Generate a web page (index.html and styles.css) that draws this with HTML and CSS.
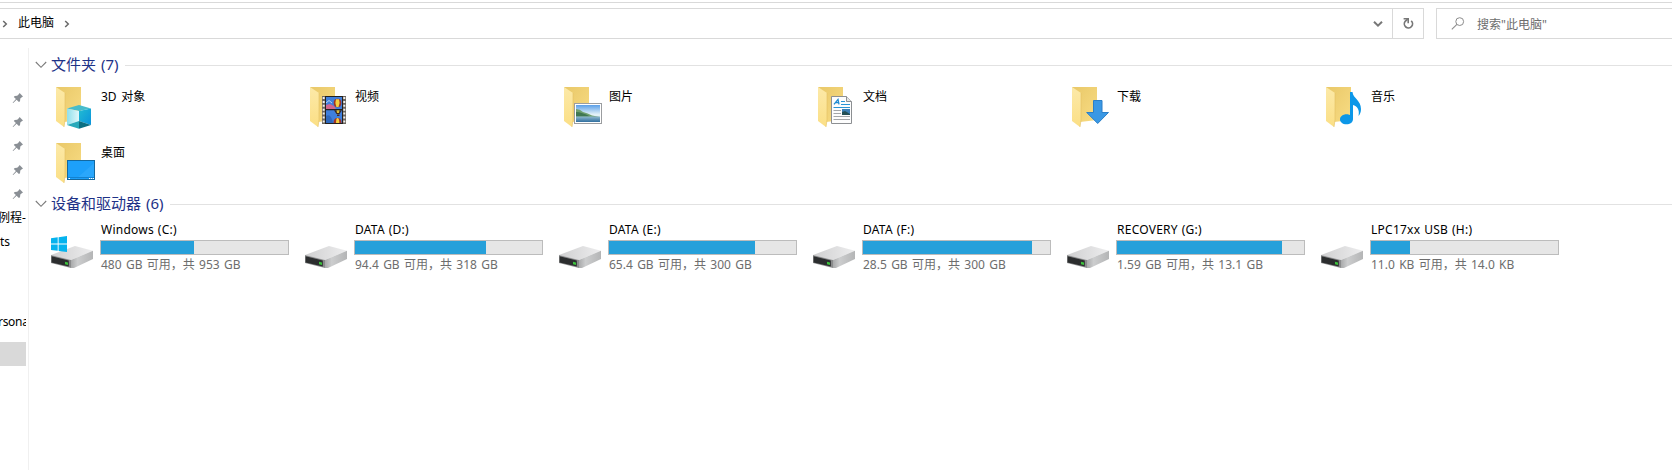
FILE: index.html
```html
<!DOCTYPE html>
<html lang="zh-CN">
<head>
    <meta charset="UTF-8">
    <title>此电脑</title>
    <link rel="stylesheet" href="styles.css">
</head>
<body>
<!-- 公用图形 -->
<svg class="defs" width="0" height="0">
    <defs>
        <linearGradient id="gBack" x1="0" y1="0" x2="1" y2="1">
            <stop offset="0" stop-color="#e9c868"/>
            <stop offset="1" stop-color="#f8dc84"/>
        </linearGradient>
        <linearGradient id="gFlap" x1="0" y1="0" x2="0" y2="1">
            <stop offset="0" stop-color="#fce9a8"/>
            <stop offset="1" stop-color="#fbdf85"/>
        </linearGradient>
        <linearGradient id="gCube" x1="0" y1="0" x2="1" y2="0">
            <stop offset="0" stop-color="#8fe0ec"/>
            <stop offset="1" stop-color="#e0f7fa"/>
        </linearGradient>
        <linearGradient id="gCubeR" x1="0" y1="0" x2="1" y2="1">
            <stop offset="0" stop-color="#22bcd2"/>
            <stop offset="1" stop-color="#0a93dc"/>
        </linearGradient>
        <linearGradient id="gSky" x1="0" y1="0" x2="0" y2="1">
            <stop offset="0" stop-color="#5b9fe8"/>
            <stop offset="0.55" stop-color="#e2f1f8"/>
            <stop offset="1" stop-color="#e2f1f8"/>
        </linearGradient>
        <linearGradient id="gSea" x1="0" y1="0" x2="0" y2="1">
            <stop offset="0" stop-color="#8fb9cf"/>
            <stop offset="1" stop-color="#316f9f"/>
        </linearGradient>
        <linearGradient id="gTop" x1="0" y1="0" x2="1" y2="0">
            <stop offset="0" stop-color="#cfcfd0"/>
            <stop offset="1" stop-color="#ededee"/>
        </linearGradient>
        <linearGradient id="gSide" x1="0" y1="0" x2="1" y2="0">
            <stop offset="0" stop-color="#a9aaab"/>
            <stop offset="0.3" stop-color="#cccdce"/>
            <stop offset="1" stop-color="#b4b5b6"/>
        </linearGradient>
    </defs>
    <symbol id="folder" viewBox="0 0 50 48">
        <path d="M5 4H30V37L13 39Z" fill="url(#gBack)"/>
        <path d="M5 4L14 10V37L13 44L5 38Z" fill="url(#gFlap)"/>
        <path d="M14 10V37L13 44" fill="none" stroke="#e3c063" stroke-width="0.6"/>
    </symbol>
    <symbol id="drive" viewBox="0 0 50 48">
        <path d="M0 33L24 24L42 28.7L20 38Z" fill="url(#gTop)"/>
        <path d="M20 38L42 28.7V37L23 46H20Z" fill="url(#gSide)"/>
        <path d="M0 33L20 38V46L0 41Z" fill="#8a8b8c"/>
        <path d="M0.6 34.2L17.8 38.4V44.6L0.6 40.4Z" fill="#2b2d2e"/>
        <path d="M14 39.8L17 40.5V43L14 42.3Z" fill="#3cc23c"/>
    </symbol>
    <symbol id="pin" viewBox="0 0 12 12">
        <path d="M7.6 1L11 4.4L9.8 5.2L8.3 6.6L8 9.2L6.9 10L4.6 7.7L1.2 11L0.6 10.8L3.9 7L1.8 4.9L2.7 4L5.2 3.7L6.8 2.2Z" fill="#8a8f95"/>
    </symbol>
    <symbol id="down" viewBox="0 0 12 8">
        <path d="M0.8 1L6 6.3L11.2 1" fill="none" stroke="#7b7b7b" stroke-width="1.1"/>
    </symbol>
    <symbol id="crumb" viewBox="0 0 6 8">
        <path d="M1.2 1L4.3 4L1.2 7" fill="none" stroke="#6a6a6a" stroke-width="1.5"/>
    </symbol>
</svg>

<div class="toolbar">
    <div class="address">
        <svg class="crumb" width="6" height="8"><use href="#crumb"/></svg>
        <span class="place">此电脑</span>
        <svg class="crumb" width="6" height="8"><use href="#crumb"/></svg>
        <div class="history">
            <svg width="10" height="8" viewBox="0 0 10 8"><path d="M1 1.7L5 5.6L9 1.7" fill="none" stroke="#777" stroke-width="2"/></svg>
        </div>
        <div class="refresh">
            <svg width="12" height="13" viewBox="0 0 12 13">
                <path d="M9.2 3.8A4.1 4.1 0 1 1 3.2 4.3L5.6 2.2" fill="none" stroke="#777" stroke-width="1.7"/>
                <path d="M1.6 1.8H6.2V6.2" fill="none" stroke="#777" stroke-width="1.6"/>
            </svg>
        </div>
    </div>
    <div class="search">
        <svg width="14" height="13" viewBox="0 0 14 13">
            <circle cx="8.7" cy="4.6" r="3.9" fill="none" stroke="#8c8c8c"/>
            <path d="M5.9 7.4L0.8 12.3" stroke="#8c8c8c" stroke-width="1.1"/>
        </svg>
        <span>搜索"此电脑"</span>
    </div>
</div>

<div class="main">
    <div class="nav">
        <div class="row pin"><svg width="12" height="12"><use href="#pin"/></svg></div>
        <div class="row pin"><svg width="12" height="12"><use href="#pin"/></svg></div>
        <div class="row pin"><svg width="12" height="12"><use href="#pin"/></svg></div>
        <div class="row pin"><svg width="12" height="12"><use href="#pin"/></svg></div>
        <div class="row pin"><svg width="12" height="12"><use href="#pin"/></svg></div>
        <div class="row cut">例程-</div>
        <div class="row">ts</div>
        <div class="row personal">rsona</div>
        <div class="row selected"></div>
    </div>

    <div class="content">
        <div class="group">
            <svg width="12" height="8"><use href="#down"/></svg>
            <h2>文件夹 (7)</h2>
            <hr>
        </div>
        <div class="folders">
            <div class="item">
                <svg width="50" height="48" viewBox="0 0 50 48">
                    <use href="#folder"/>
                    <path d="M16 25.5L28 22L40 25.5L28 28Z" fill="#48bccb"/>
                    <path d="M16 25.5L28 28V38L16 42Z" fill="url(#gCube)"/>
                    <path d="M28 28L40 25.5V42L28 38Z" fill="url(#gCubeR)"/>
                    <path d="M16 42L28 38V45.7Z" fill="#28a9ba"/>
                    <path d="M28 38L40 42L28 45.7Z" fill="#0b6f82"/>
                </svg>
                <span>3D 对象</span>
            </div>
            <div class="item">
                <svg width="50" height="48" viewBox="0 0 50 48">
                    <use href="#folder"/>
                    <path d="M17 13H41V41H17Z" fill="#6c665f"/>
                    <path d="M18.7 14V41M39.3 14V41" stroke="#f1efec" stroke-width="2" stroke-dasharray="2 1.9"/>
                    <path d="M20 13H38V41H20Z" fill="#23211f"/>
                    <path d="M21 14H37V26H21ZM21 27.3H37V40H21Z" fill="#3f7fdc"/>
                    <path d="M21 22L25 21L29 23L31 26H21Z" fill="#d0668f"/>
                    <path d="M21 20L24 17.5L27 20" fill="none" stroke="#b9d3f0"/>
                    <ellipse cx="32.5" cy="20" rx="3.8" ry="4.2" fill="#a33427"/>
                    <path d="M31 16.2Q29.5 20 31.4 24H33.5Q35.5 20 34 16.2Z" fill="#f2cf3e"/>
                    <path d="M29 27.3H37L34.5 31H31.5Z" fill="#3a2a25"/>
                    <path d="M31.5 27.3H34.5L34 30H32Z" fill="#d8ba36"/>
                    <path d="M32 31.5H34.5V33H32Z" fill="#4b2b20"/>
                    <path d="M21 33Q26 30 28 40H21Z" fill="#2e68bd"/>
                    <path d="M28.5 40Q28.5 35 32.5 35Q36.5 35 36.5 40Z" fill="#a33427"/>
                    <path d="M31 40Q31 35 32.5 35Q34.3 35 34.3 40Z" fill="#f2cf3e"/>
                </svg>
                <span>视频</span>
            </div>
            <div class="item">
                <svg width="50" height="48" viewBox="0 0 50 48">
                    <use href="#folder"/>
                    <rect x="15.5" y="20.5" width="27" height="20" fill="#fff" stroke="#9b9da0"/>
                    <rect x="17" y="22" width="24" height="17" fill="url(#gSky)"/>
                    <path d="M17 26Q21 26 24 29Q29 30 33 32.5L41 34H17Z" fill="#6fa070"/>
                    <path d="M17 29Q23 29 31 33.5H17Z" fill="#3f7752"/>
                    <path d="M17 33.5H41V39H17Z" fill="url(#gSea)"/>
                </svg>
                <span>图片</span>
            </div>
            <div class="item">
                <svg width="50" height="48" viewBox="0 0 50 48">
                    <use href="#folder"/>
                    <path d="M18.5 13.5H33.5L38.5 18.5V40.5H18.5Z" fill="#fdfdfd" stroke="#8c8f92"/>
                    <path d="M33.5 13.5V18.5H38.5" fill="#e4e5e6" stroke="#8c8f92"/>
                    <path d="M21 21.4L25 16.4L26 21.4M22.6 19.6H26" fill="none" stroke="#1e8bd2" stroke-width="1.3"/>
                    <path d="M28 18.5H32M28 21.5H37M20.5 24.5H37" stroke="#2b95d5"/>
                    <path d="M20.5 27.5H28M20.5 30.5H28M20.5 33.5H37M20.5 36.5H37" stroke="#a3a6a9"/>
                    <path d="M29 26H37V32H29Z" fill="#3c7fb6"/>
                    <path d="M29 29L32 28L37 31V32H29Z" fill="#234f55"/>
                </svg>
                <span>文档</span>
            </div>
            <div class="item">
                <svg width="50" height="48" viewBox="0 0 50 48">
                    <use href="#folder"/>
                    <path d="M26.5 17.5H35V29.5H41.5L30.7 40.5L19.7 29.5H26.5Z" fill="#3a98e4" stroke="#2a7fc8"/>
                </svg>
                <span>下载</span>
            </div>
            <div class="item">
                <svg width="50" height="48" viewBox="0 0 50 48">
                    <use href="#folder"/>
                    <path d="M29 9H31.5C32 15.5 40 17 40 26C40 29 39 31.5 37.5 33C39 26.5 36 23 32 22V36C32 39.5 29 41.3 25.5 41.3C21.5 41.3 19 39 19 36.5C19 33.5 22 31.3 25.5 31.3C27 31.3 28 31.6 29 32Z" fill="#0c97e8"/>
                </svg>
                <span>音乐</span>
            </div>
            <div class="item">
                <svg width="50" height="48" viewBox="0 0 50 48">
                    <use href="#folder"/>
                    <rect x="16.5" y="21.5" width="27" height="19" fill="#1da0fa" stroke="#14699f"/>
                    <path d="M25 40L43 24V38H25Z" fill="#38adfd" opacity="0.5"/>
                    <path d="M17 38.5H43" stroke="#1283d2"/>
                    <path d="M17.5 39.5H19M38 39.5H39.3M40 39.5H41.3M42 39.5H43" stroke="#fff"/>
                </svg>
                <span>桌面</span>
            </div>
        </div>

        <div class="group">
            <svg width="12" height="8"><use href="#down"/></svg>
            <h2>设备和驱动器 (6)</h2>
            <hr>
        </div>
        <div class="drives">
            <div class="drive">
                <svg width="50" height="48" viewBox="0 0 50 48">
                    <use href="#drive"/>
                    <path d="M0 16.3L6.7 15.3V21.6H0ZM7.6 15.2L16 14V21.6H7.6ZM0 22.5H6.7V28.8L0 27.9ZM7.6 22.5H16V30L7.6 28.9Z" fill="#05b3ee"/>
                </svg>
                <div class="info">
                    <div class="name">Windows (C:)</div>
                    <div class="bar"><div class="used" style="width: 49.7%"></div></div>
                    <div class="free">480 GB 可用，共 953 GB</div>
                </div>
            </div>
            <div class="drive">
                <svg width="50" height="48"><use href="#drive"/></svg>
                <div class="info">
                    <div class="name">DATA (D:)</div>
                    <div class="bar"><div class="used" style="width: 70.3%"></div></div>
                    <div class="free">94.4 GB 可用，共 318 GB</div>
                </div>
            </div>
            <div class="drive">
                <svg width="50" height="48"><use href="#drive"/></svg>
                <div class="info">
                    <div class="name">DATA (E:)</div>
                    <div class="bar"><div class="used" style="width: 78.2%"></div></div>
                    <div class="free">65.4 GB 可用，共 300 GB</div>
                </div>
            </div>
            <div class="drive">
                <svg width="50" height="48"><use href="#drive"/></svg>
                <div class="info">
                    <div class="name">DATA (F:)</div>
                    <div class="bar"><div class="used" style="width: 90.5%"></div></div>
                    <div class="free">28.5 GB 可用，共 300 GB</div>
                </div>
            </div>
            <div class="drive">
                <svg width="50" height="48"><use href="#drive"/></svg>
                <div class="info">
                    <div class="name">RECOVERY (G:)</div>
                    <div class="bar"><div class="used" style="width: 88.2%"></div></div>
                    <div class="free">1.59 GB 可用，共 13.1 GB</div>
                </div>
            </div>
            <div class="drive">
                <svg width="50" height="48"><use href="#drive"/></svg>
                <div class="info">
                    <div class="name">LPC17xx USB (H:)</div>
                    <div class="bar"><div class="used" style="width: 21%"></div></div>
                    <div class="free">11.0 KB 可用，共 14.0 KB</div>
                </div>
            </div>
        </div>
    </div>
</div>
</body>
</html>
```
FILE: styles.css
```css
*{
    padding: 0;
    margin: 0;
    box-sizing: border-box;
}
body{
    background: #fff;
    font-family: "Noto Sans", "Noto Sans CJK SC", sans-serif;
    font-size: 12px;
    color: #000;
    height: 470px;
    overflow: hidden;
}
svg{
    display: block;
    flex: none;
}
.defs{
    position: absolute;
}

/* 地址栏 */
.toolbar{
    display: flex;
    margin-top: 2px;
    border-top: 1px solid #d9d9d9;
    padding-top: 5px;
    gap: 12px;
}
.address{
    display: flex;
    align-items: center;
    width: 1424px;
    height: 31px;
    border: 1px solid #d9d9d9;
    border-left: none;
    padding-left: 2px;
}
.place{
    margin: 0 10px;
    padding-bottom: 1px;
    line-height: 18px;
}
.history{
    margin-left: auto;
    padding-right: 9px;
}
.refresh{
    display: flex;
    align-items: center;
    justify-content: center;
    width: 31px;
    height: 29px;
    border-left: 1px solid #d9d9d9;
}
.search{
    display: flex;
    align-items: center;
    flex: 1;
    height: 31px;
    border: 1px solid #d9d9d9;
    border-right: none;
    padding-left: 14px;
    gap: 12px;
    color: #6d6d6d;
}

/* 左侧导航 */
.main{
    display: flex;
    height: 431px;
}
.nav{
    width: 29px;
    margin-top: 9px;
    padding-top: 38px;
    border-right: 1px solid #f0f0f0;
}
.row{
    width: 26px;
    height: 24px;
    line-height: 24px;
    white-space: nowrap;
    overflow: hidden;
}
.pin{
    padding: 6px 0 0 12px;
}
.cut{
    text-indent: -2px;
}
.personal{
    margin-top: 56px;
    text-indent: -2px;
    letter-spacing: -0.3px;
}
.selected{
    background: #d9d9d9;
    margin-top: 8px;
}

/* 右侧内容 */
.content{
    flex: 1;
    padding: 15px 0 0 6px;
}
.group{
    display: flex;
    align-items: center;
    height: 22px;
}
.group h2{
    margin: 0 7px 0 4px;
    padding-bottom: 2px;
    font-size: 15px;
    font-weight: normal;
    line-height: 20px;
    word-spacing: 1px;
    color: #1e3287;
}
.group hr{
    flex: 1;
    border: none;
    border-top: 1px solid #e2e2e2;
}
.folders{
    display: grid;
    grid-template-columns: repeat(6, 254px);
    grid-template-rows: 56px 54px;
    padding: 7px 0 0 16px;
}
.item{
    display: flex;
}
.item span{
    line-height: 18px;
    margin-top: 5px;
    word-spacing: 1.5px;
}
.drives{
    display: grid;
    grid-template-columns: repeat(6, 254px);
    padding: 7px 0 0 16px;
}
.drive{
    display: flex;
}
.info{
    width: 189px;
    margin-left: -1px;
}
.name{
    height: 18px;
    line-height: 16px;
    padding-left: 1px;
    letter-spacing: 0.25px;
    word-spacing: 0.5px;
}
.bar{
    height: 15px;
    background: #e6e6e6;
    border: 1px solid #bcbcbc;
}
.used{
    height: 13px;
    background: #26a0da;
}
.free{
    line-height: 20px;
    padding-left: 1px;
    color: #6d6d6d;
    word-spacing: 1.2px;
    white-space: nowrap;
}
```
